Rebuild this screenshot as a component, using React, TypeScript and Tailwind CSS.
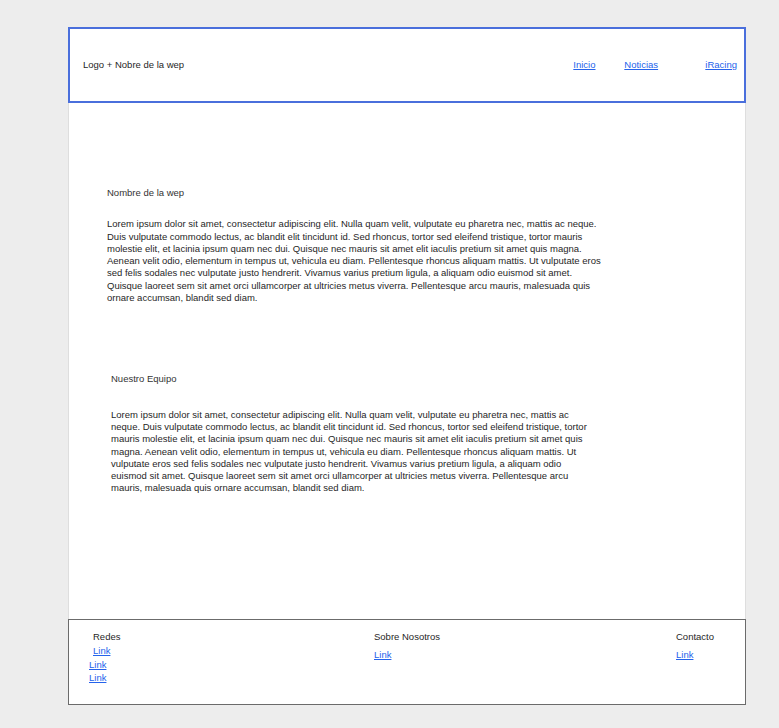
const lorem =
  'Lorem ipsum dolor sit amet, consectetur adipiscing elit. Nulla quam velit, vulputate eu pharetra nec, mattis ac neque. Duis vulputate commodo lectus, ac blandit elit tincidunt id. Sed rhoncus, tortor sed eleifend tristique, tortor mauris molestie elit, et lacinia ipsum quam nec dui. Quisque nec mauris sit amet elit iaculis pretium sit amet quis magna. Aenean velit odio, elementum in tempus ut, vehicula eu diam. Pellentesque rhoncus aliquam mattis. Ut vulputate eros sed felis sodales nec vulputate justo hendrerit. Vivamus varius pretium ligula, a aliquam odio euismod sit amet. Quisque laoreet sem sit amet orci ullamcorper at ultricies metus viverra. Pellentesque arcu mauris, malesuada quis ornare accumsan, blandit sed diam.';

const linkCls = 'text-[#2563eb] underline';

export default function App() {
  return (
    <div
      className="min-h-screen bg-[#ededed] pt-[27px] pl-[68px] text-[9.5px] leading-[12.3px] text-[#1f1f1f]"
      style={{ fontFamily: '"Liberation Sans", Arial, sans-serif' }}
    >
      <div className="w-[678px]">
        {/* header */}
        <header className="h-[76px] border-2 border-[#4a6fdc] bg-white flex items-center justify-between pl-[13px] pr-[7px]">
          <span>Logo + Nobre de la wep</span>
          <nav className="flex items-center">
            <a href="#" className={`${linkCls} w-[51px]`}>Inicio</a>
            <a href="#" className={`${linkCls} w-[81px]`}>Noticias</a>
            <a href="#" className={linkCls}>iRacing</a>
          </nav>
        </header>

        {/* contenido */}
        <main className="h-[516px] bg-white border-x border-[#dedede]">
          <section className="pt-[84px] pl-[38px]">
            <h2 className="text-[#333]">Nombre de la wep</h2>
            <p className="mt-[19px] w-[496px]">{lorem}</p>
          </section>
          <section className="pt-[69px] pl-[42px]">
            <h2 className="text-[#333]">Nuestro Equipo</h2>
            <p className="mt-[23px] w-[480px]">{lorem}</p>
          </section>
        </main>

        {/* footer */}
        <footer className="h-[86px] bg-white border border-[#6b6b6b] flex pl-[24px] pt-[11px]">
          <div className="w-[281px] flex flex-col">
            <span>Redes</span>
            <a href="#" className={`${linkCls} mt-[2px]`}>Link</a>
            <a href="#" className={`${linkCls} -ml-[4px] mt-[1px]`}>Link</a>
            <a href="#" className={`${linkCls} -ml-[4px] mt-[1px]`}>Link</a>
          </div>
          <div className="w-[302px] flex flex-col items-start">
            <span>Sobre Nosotros</span>
            <a href="#" className={`${linkCls} mt-[6px]`}>Link</a>
          </div>
          <div className="flex flex-col items-start">
            <span>Contacto</span>
            <a href="#" className={`${linkCls} mt-[6px]`}>Link</a>
          </div>
        </footer>
      </div>
    </div>
  );
}
